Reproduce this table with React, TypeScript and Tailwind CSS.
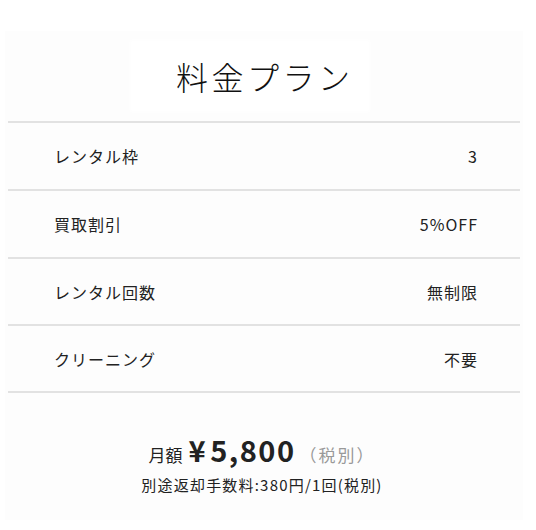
const rows = [
  { label: "レンタル枠", value: "3" },
  { label: "買取割引", value: "5%OFF" },
  { label: "レンタル回数", value: "無制限" },
  { label: "クリーニング", value: "不要" },
]

export default function App() {
  return (
    <div
      className="min-h-screen bg-white pt-[31px] px-[5px] text-[#222]"
      style={{ fontFamily: '"Noto Sans CJK JP", "Noto Sans", sans-serif' }}
    >
      <div className="w-[518px] bg-[#fdfdfd] pb-[24px]">
        {/* Title */}
        <div className="h-[90px] flex items-center">
          <div className="ml-[127px] w-[236px] h-[68px] bg-white shadow-[0_0_4px_2px_#ffffff] flex items-center pl-[44px]">
            <h1 className="text-[32px] font-light tracking-[3.5px] leading-none text-[#111]">料金プラン</h1>
          </div>
        </div>

        {/* Rows */}
        <div className="mx-[3px] border-t-2 border-[#e2e2e2]">
          {rows.map((row, i) => (
            <div
              key={row.label}
              className={
                "flex items-center justify-between pl-[46px] pr-[42px] border-b-2 border-[#e2e2e2] text-[16px] tracking-[1px] " +
                (i < 2 ? "h-[68px]" : "h-[67px]")
              }
            >
              <span>{row.label}</span>
              <span>{row.value}</span>
            </div>
          ))}
        </div>

        {/* Price */}
        <div className="flex flex-col items-center pt-[42px] pr-[4px]">
          <div className="flex items-baseline gap-[6px]">
            <span className="text-[17px]">月額</span>
            <span className="text-[29px] font-bold leading-none tracking-[1.5px]">
              <span className="mr-[3px]">¥</span>5,800
            </span>
            <span className="text-[17px] text-[#999] -ml-[2px] tracking-[2px]">（税別）</span>
          </div>
          <p className="text-[15px] tracking-[1.2px] mt-[6px]">別途返却手数料:380円/1回(税別)</p>
        </div>
      </div>
    </div>
  )
}
